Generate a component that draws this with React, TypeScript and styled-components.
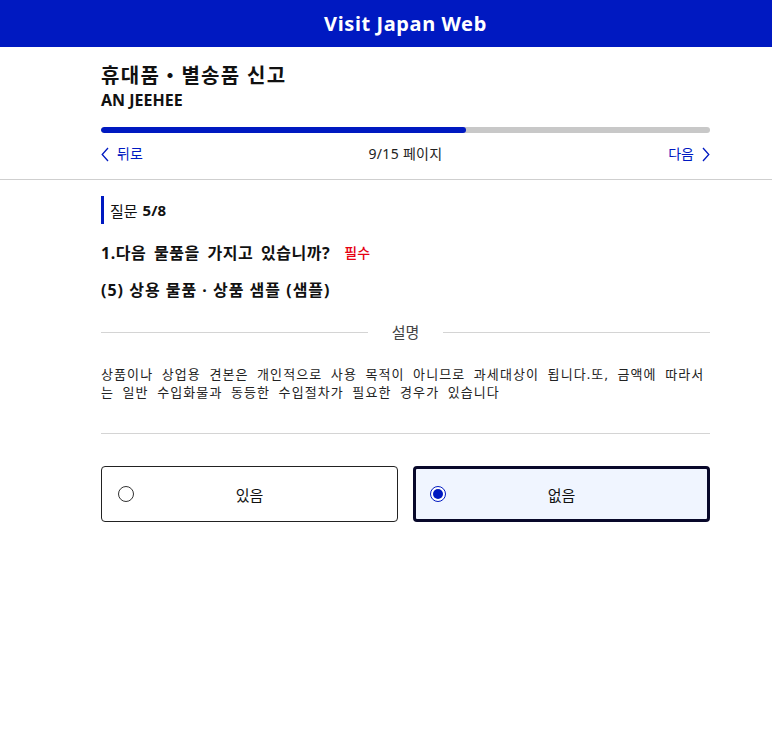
import React from "react";
import styled, { createGlobalStyle } from "styled-components";

const Global = createGlobalStyle`
  html, body { margin: 0; padding: 0; background: #fff; }
  body { font-family: "Noto Sans", "Noto Sans CJK KR", sans-serif; color: #111; }
  * { box-sizing: border-box; }
`;

const Column = styled.div`
  width: 609px;
  margin-left: 101px;
`;

const Header = styled.header`
  height: 47px;
  background: #0019c1;
  color: #fff;
  font-size: 20px;
  font-weight: 700;
  letter-spacing: 0.6px;
`;

const HeaderInner = styled(Column)`
  height: 100%;
  display: flex;
  align-items: center;
  justify-content: center;
`;

const Top = styled.section`
  border-bottom: 1px solid #cfcfcf;
  padding-top: 15px;
  height: 133px;
`;

const Title = styled.h1`
  margin: 0;
  font-size: 20px;
  line-height: 28px;
  font-weight: 700;
  letter-spacing: 1.3px;
`;

const Name = styled.div`
  font-size: 16px;
  font-weight: 700;
  line-height: 20px;
`;

const Track = styled.div`
  margin-top: 17px;
  height: 6px;
  border-radius: 3px;
  background: #c8c8c8;
  overflow: hidden;
`;

const Fill = styled.div`
  height: 100%;
  background: #0019c1;
  border-radius: 3px;
`;

const Nav = styled.div`
  margin-top: 11px;
  display: flex;
  align-items: center;
  justify-content: space-between;
  font-size: 14px;
  line-height: 20px;
`;

const NavLink = styled.span`
  display: flex;
  align-items: center;
  gap: 8px;
  color: #0019c1;
`;

const PageCount = styled.span`
  color: #222;
  letter-spacing: 0.3px;
`;

const QLabel = styled.div`
  margin-top: 16px;
  border-left: 3px solid #0019c1;
  padding-left: 6px;
  height: 28px;
  display: flex;
  align-items: center;
  font-size: 15px;
  gap: 5px;
`;

const Bold = styled.b`
  font-weight: 700;
`;

const Question = styled.div`
  margin-top: 15px;
  font-size: 16px;
  font-weight: 700;
  line-height: 28px;
  word-spacing: 3px;
  letter-spacing: 0.55px;
  display: flex;
  align-items: center;
`;

const Required = styled.span`
  color: #e60012;
  font-size: 14px;
  font-weight: 500;
  margin-left: 14px;
  letter-spacing: 0;
`;

const Item = styled.div`
  margin-top: 9px;
  font-size: 16px;
  font-weight: 700;
  line-height: 28px;
  letter-spacing: 1px;
`;

const Divider = styled.div`
  margin-top: 14px;
  display: flex;
  align-items: center;
  gap: 24px;
  color: #444;
  font-size: 15px;
  line-height: 28px;
  &::before, &::after {
    content: "";
    flex: 1;
    height: 1px;
    background: #d4d4d4;
  }
`;

const Desc = styled.p`
  margin: 19px 0 0;
  font-size: 13px;
  line-height: 18px;
  word-spacing: 4px;
  letter-spacing: 1.1px;
  color: #222;
  padding-bottom: 32px;
  border-bottom: 1px solid #d4d4d4;
`;

const Choices = styled.div`
  margin-top: 32px;
  display: grid;
  grid-template-columns: 1fr 1fr;
  gap: 15px;
`;

const Choice = styled.label<{ $selected?: boolean }>`
  height: 56px;
  border-radius: 4px;
  border: ${(p) => (p.$selected ? "3px solid #08082a" : "1px solid #222")};
  background: ${(p) => (p.$selected ? "#f0f5ff" : "#fff")};
  display: flex;
  align-items: center;
  padding-left: ${(p) => (p.$selected ? "14px" : "16px")};
  font-size: 15px;
  cursor: pointer;
`;

const Radio = styled.span<{ $selected?: boolean }>`
  width: 16px;
  height: 16px;
  border-radius: 50%;
  border: ${(p) => (p.$selected ? "1.5px solid #0019c1" : "1px solid #333")};
  background: #fff;
  display: flex;
  align-items: center;
  justify-content: center;
  flex: none;
  &::after {
    content: "";
    width: 10px;
    height: 10px;
    border-radius: 50%;
    background: #0019c1;
    display: ${(p) => (p.$selected ? "block" : "none")};
  }
`;

const ChoiceText = styled.span<{ $selected?: boolean }>`
  flex: 1;
  text-align: center;
  padding-right: ${(p) => (p.$selected ? "30px" : "32px")};
`;

const Chevron = ({ dir }: { dir: "left" | "right" }) => (
  <svg width="8" height="15" viewBox="0 0 8 15" fill="none">
    <path
      d={dir === "left" ? "M7 1L1.2 7.5L7 14" : "M1 1L6.8 7.5L1 14"}
      stroke="#0019c1"
      strokeWidth="1.3"
    />
  </svg>
);

export default function App() {
  const progress = 9 / 15;
  return (
    <>
      <Global />
      <Header>
        <HeaderInner>Visit Japan Web</HeaderInner>
      </Header>
      <Top>
        <Column>
          <Title>휴대품・별송품 신고</Title>
          <Name>AN JEEHEE</Name>
          <Track>
            <Fill style={{ width: `${progress * 100}%` }} />
          </Track>
          <Nav>
            <NavLink>
              <Chevron dir="left" /> 뒤로
            </NavLink>
            <PageCount>9/15 페이지</PageCount>
            <NavLink>
              다음 <Chevron dir="right" />
            </NavLink>
          </Nav>
        </Column>
      </Top>
      <Column>
        <QLabel>
          질문 <Bold>5/8</Bold>
        </QLabel>
        <Question>
          1.다음 물품을 가지고 있습니까?<Required>필수</Required>
        </Question>
        <Item>(5) 상용 물품 · 상품 샘플 (샘플)</Item>
        <Divider>설명</Divider>
        <Desc>
          상품이나 상업용 견본은 개인적으로 사용 목적이 아니므로 과세대상이 됩니다.또, 금액에 따라서는 일반 수입화물과 동등한 수입절차가 필요한 경우가 있습니다
        </Desc>
        <Choices>
          <Choice>
            <Radio />
            <ChoiceText>있음</ChoiceText>
          </Choice>
          <Choice $selected>
            <Radio $selected />
            <ChoiceText $selected>없음</ChoiceText>
          </Choice>
        </Choices>
      </Column>
    </>
  );
}
